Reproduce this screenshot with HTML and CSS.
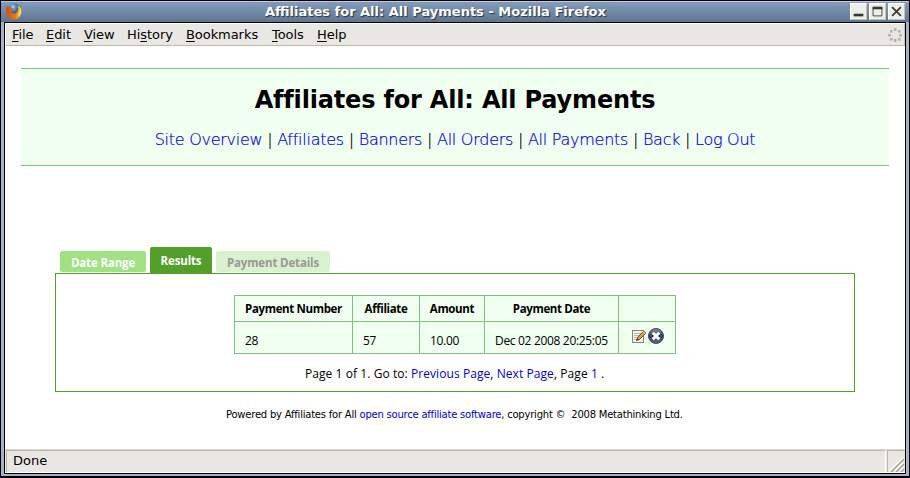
FILE: index.html
```html
<!DOCTYPE html>
<html lang="en">
<head>
<meta charset="utf-8">
<title>Affiliates for All: All Payments</title>
<link rel="stylesheet" href="styles.css">
</head>
<body>
<div class="window">
  <div class="titlebar">
    <svg class="fox" width="18" height="18" viewBox="0 0 18 18">
      <defs><radialGradient id="globe" cx=".4" cy=".25" r=".7"><stop offset="0" stop-color="#a6d7ee"/><stop offset=".45" stop-color="#3975b0"/><stop offset="1" stop-color="#14235c"/></radialGradient>
      <linearGradient id="fur" x1="0" x2="1"><stop offset="0" stop-color="#c9501b"/><stop offset=".6" stop-color="#e57a1c"/><stop offset="1" stop-color="#ffd33c"/></linearGradient></defs>
      <circle cx="9.2" cy="7.6" r="7" fill="url(#globe)"/>
      <path d="M2 2.6L3.4 3.9 5.4 3.4 6.8 4.8 8.8 5.5 7.6 7.2 6 8.2 7 10 10 10.4 12.4 8.8 13.2 5.8 12.2 2.2C15.4 3.6 16.8 7 16.2 10.6C15.4 14.2 12.6 16.4 9 16.4C4.5 16.4 1 13.2 1 8.8C1 6.4 1.3 4.4 2 2.6Z" fill="url(#fur)"/>
      <path d="M13 3C15.8 5.6 15.6 10.2 12.2 13C15 12.2 16.4 10 16.2 7.2C15.8 5 14.6 3.6 13 3Z" fill="#ffe15a"/>
    </svg>
    <div class="caption">Affiliates for All: All Payments - Mozilla Firefox</div>
    <div class="buttons">
      <svg width="17" height="17" viewBox="0 0 17 17"><path d="M3 12.5h11" stroke="#383833" stroke-width="3"/></svg>
      <svg width="17" height="17" viewBox="0 0 17 17"><path d="M3 4.5h11" stroke="#383833" stroke-width="3"/><path d="M3.5 4v9.5h10V4" fill="none" stroke="#383833"/></svg>
      <svg width="17" height="17" viewBox="0 0 17 17"><path d="M3.5 3.5l10 10M13.5 3.5l-10 10" stroke="#383833" stroke-width="2"/></svg>
    </div>
  </div>
  <div class="client">
    <div class="menubar">
      <span class="m-file"><u>F</u>ile</span><span class="m-edit"><u>E</u>dit</span><span class="m-view"><u>V</u>iew</span><span class="m-hist">Hi<u>s</u>tory</span><span class="m-book"><u>B</u>ookmarks</span><span class="m-tool"><u>T</u>ools</span><span class="m-help"><u>H</u>elp</span>
      <svg class="throbber" width="14" height="14" viewBox="0 0 14 14" fill="#b5b3ae"><rect x="6" y="0" width="2.4" height="3"/><rect x="6" y="11" width="2.4" height="3"/><rect x="0" y="6" width="3" height="2.4"/><rect x="11" y="6" width="3" height="2.4"/><rect x="2" y="2" width="2.6" height="2.6"/><rect x="10" y="2" width="2.6" height="2.6"/><rect x="2" y="10" width="2.6" height="2.6"/><rect x="10" y="10" width="2.6" height="2.6"/></svg>
    </div>
    <main class="page">
      <header class="banner">
        <h1>Affiliates for All: All Payments</h1>
        <nav><a>Site Overview</a> | <a>Affiliates</a> | <a>Banners</a> | <a>All Orders</a> | <a>All Payments</a> | <a>Back</a> | <a>Log Out</a></nav>
      </header>
      <div class="tabs">
        <div class="tab range"><span>Date Range</span></div>
        <div class="tab active"><span>Results</span></div>
        <div class="tab disabled"><span>Payment Details</span></div>
      </div>
      <section class="panel">
        <div class="grid">
          <div class="th">Payment Number</div><div class="th">Affiliate</div><div class="th">Amount</div><div class="th">Payment Date</div><div class="th"></div>
          <div class="td">28</div><div class="td">57</div><div class="td">10.00</div><div class="td">Dec 02 2008 20:25:05</div>
          <div class="td actions">
            <svg width="16" height="16" viewBox="0 0 16 16"><rect x="1.5" y="2.5" width="11" height="12" fill="#f4f4f2" stroke="#85857f"/><path d="M3 5.5h7M3 7.5h6M3 9.5h4M3 11.5h3" stroke="#b9b9b9"/><path d="M5.5 12.5l1.2-3.2 6-6.2 2.1 2-6.2 6.3z" fill="#dda03c" stroke="#684218" stroke-width=".9"/><path d="M12 3.8l2.1 2" stroke="#f5d9a0"/><path d="M5.5 12.5l1-2.2 1.2 1.2z" fill="#222"/></svg>
            <svg width="16" height="16" viewBox="0 0 16 16"><defs><linearGradient id="orb" x2="0" y2="1"><stop offset="0" stop-color="#8c8da3"/><stop offset=".5" stop-color="#3b3d5c"/><stop offset="1" stop-color="#686a8b"/></linearGradient></defs><circle cx="8" cy="8" r="7.5" fill="url(#orb)" stroke="#343650" stroke-width=".9"/><path d="M4.8 4.8l6.4 6.4M11.2 4.8l-6.4 6.4" stroke="#fff" stroke-width="3"/></svg>
          </div>
        </div>
        <p class="pager">Page 1 of 1. Go to: <a>Previous Page</a>, <a>Next Page</a>, Page <a>1</a> .</p>
      </section>
      <footer>Powered by Affiliates for All <a>open source affiliate software</a>, copyright ©&nbsp; 2008 Metathinking Ltd.</footer>
    </main>
    <div class="status">
      <div class="message">Done</div>
      <div class="grip"><svg width="15" height="15" viewBox="0 0 15 15"><path d="M1 15L14 2M6 15l8-8M11 15l3-3" stroke="#fff" stroke-width="1.5" transform="translate(-1 -1)"/><path d="M1 15L14 2M6 15l8-8M11 15l3-3" stroke="#aaa594" stroke-width="1.7"/></svg></div>
    </div>
  </div>
</div>
</body>
</html>
```
FILE: styles.css
```css
* { box-sizing: border-box; }
body { margin: 0; font-family: "DejaVu Sans", sans-serif; color: #000; }
a { color: #0000e8; }
.window { width: 910px; height: 478px; border: 1px solid #000; background: #a4b3c9; padding: 0 3px 2px; display: flex; flex-direction: column; border-bottom-width: 2px; white-space: nowrap; }
.titlebar { height: 21px; margin: 0 -3px; padding: 1px 4px 0; display: flex; background: linear-gradient(#829cbc, #5f758f); border-top: 1px solid #c2cbdc; }
.fox { width: 18px; height: 18px; }
.caption { flex: 1; color: #fff; font-weight: bold; font-size: 13px; line-height: 17px; text-shadow: 1px 1px 1px #263344; padding-left: 242px; }
.buttons { display: flex; gap: 2px; }
.buttons svg { background: #eeede9; border: 1px solid #fff; border-right-color: #c7c3ae; border-bottom-color: #c7c3ae; }
.client { flex: 1; border: 1px solid #000; background: #fff; display: flex; flex-direction: column; }
.menubar { height: 23px; background: #e9e7e3; border: 1px solid #fff; border-bottom-color: #bdb9aa; border-right-color: #c9c5b2; display: flex; align-items: center; padding: 0 2px 0 6px; font-size: 13px; line-height: 20px; letter-spacing: -.06px; }
.menubar u { text-underline-offset: 2px; text-decoration-thickness: 1px; }
.m-file { width: 34px; }
.m-edit { width: 38px; }
.m-view { width: 43px; }
.m-hist { width: 59px; }
.m-book { width: 86px; }
.m-tool { width: 45px; }
.throbber { margin-left: auto; }
.page { flex: 1; }
.banner { margin: 22px 16px 0; height: 98px; background: #f0fff0; border: solid #7fbf7f; border-width: 1px 0; text-align: center; }
h1 { font-size: 24px; line-height: 28px; margin: 17px 0 0; letter-spacing: -.18px; }
nav { font-size: 16px; font-weight: 200; line-height: 20px; margin-top: 16px; letter-spacing: -.26px; -webkit-text-stroke: .2px; }
.tabs { display: flex; align-items: flex-end; gap: 4px; height: 26px; margin: 81px 0 0 55px; font-family: "Open Sans", "Noto Sans", sans-serif; font-size: 11.5px; font-weight: bold; color: #fff; letter-spacing: -.15px; }
.tab { height: 21px; line-height: 23px; margin-bottom: 1px; text-align: center; border-radius: 2px; }
.range { width: 86px; background: #a1e083; }
.active { width: 62px; height: 26px; line-height: 27px; margin: 0; background: #529f29; border-radius: 2px 2px 0 0; }
.disabled { width: 114px; background: #d9f1cd; color: #999; }
.panel { width: 800px; height: 119px; margin-left: 50px; border: 1px solid #529f29; padding-top: 21px; font-family: "Open Sans", "Noto Sans", sans-serif; font-size: 12px; }
.grid { width: 442px; margin-left: 178px; display: grid; grid-template-columns: 118px 67px 65px 134px 57px; grid-template-rows: 26px 32px; border: solid #7fbf7f; border-width: 1px 0 0 1px; background: #f0fff0; }
.th, .td { border: solid #7fbf7f; border-width: 0 1px 1px 0; }
.th { font-size: 11.5px; font-weight: bold; line-height: 26px; text-align: center; letter-spacing: -.36px; }
.td { padding-left: 10px; line-height: 38px; letter-spacing: -.32px; }
.actions { display: flex; gap: 1px; padding: 6px 0 0 12px; }
.pager { margin: 12px 0 0; line-height: 16px; padding-left: 249px; letter-spacing: .07px; }
footer { margin: 15px 0 0 221px; font-size: 10px; line-height: 15px; letter-spacing: -.22px; }
.status { height: 24px; background: #e9e7e3; border-top: 1px solid #dcd8cc; border-bottom: 1px solid #fff; display: flex; gap: 1px; padding-left: 1px; font-size: 13px; }
.message { flex: 1; border: solid #bdb9aa; border-width: 1px 0 0 1px; padding-left: 6px; line-height: 20px; border-right: 1px solid #fff; }
.grip { width: 18px; border: solid #bdb9aa; border-width: 1px 0 0 1px; padding-left: 2px; display: flex; align-items: flex-end; }
```
